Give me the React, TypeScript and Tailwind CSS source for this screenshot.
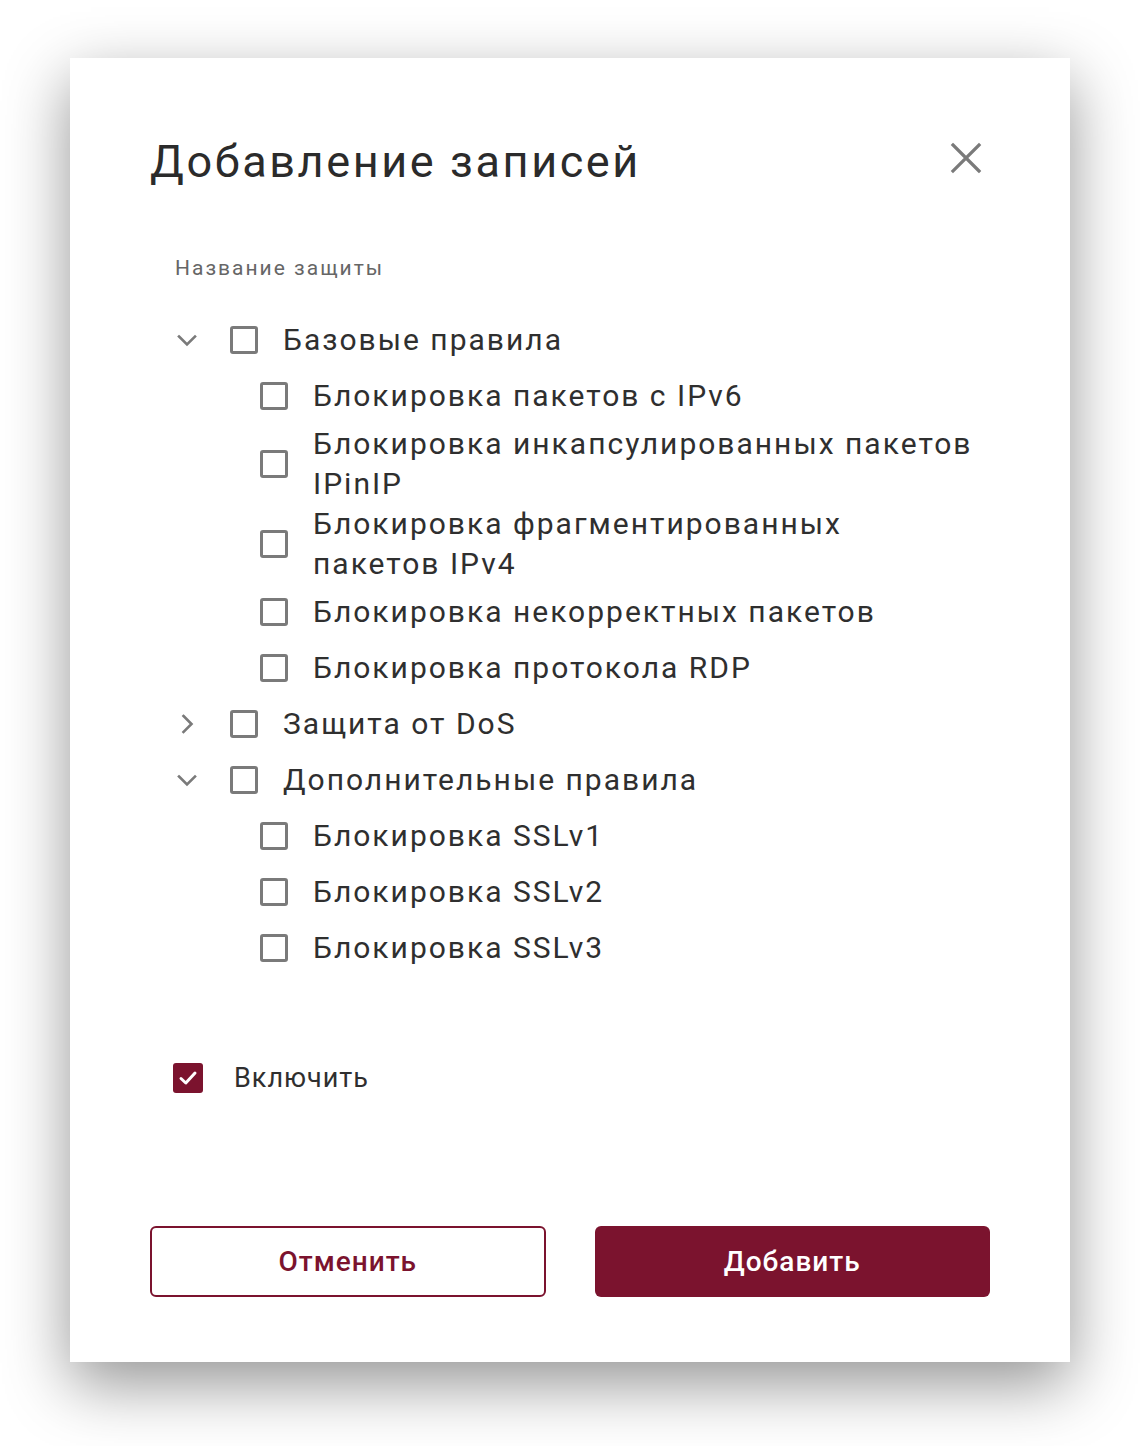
import { useState } from 'react'

type Rule = { id: string; label: string }
type Group = { id: string; label: string; open: boolean; rules: Rule[] }

const groups: Group[] = [
  {
    id: 'base',
    label: 'Базовые правила',
    open: true,
    rules: [
      { id: 'ipv6', label: 'Блокировка пакетов с IPv6' },
      { id: 'ipinip', label: 'Блокировка инкапсулированных пакетов IPinIP' },
      { id: 'frag', label: 'Блокировка фрагментированных пакетов IPv4' },
      { id: 'bad', label: 'Блокировка некорректных пакетов' },
      { id: 'rdp', label: 'Блокировка протокола RDP' },
    ],
  },
  { id: 'dos', label: 'Защита от DoS', open: false, rules: [] },
  {
    id: 'extra',
    label: 'Дополнительные правила',
    open: true,
    rules: [
      { id: 'ssl1', label: 'Блокировка SSLv1' },
      { id: 'ssl2', label: 'Блокировка SSLv2' },
      { id: 'ssl3', label: 'Блокировка SSLv3' },
    ],
  },
]

function Box() {
  return <span className="block h-[28px] w-[28px] shrink-0 rounded-[3px] border-[3px] border-[#7a7a7a]" />
}

function Chevron({ open }: { open: boolean }) {
  return (
    <svg width="24" height="24" viewBox="0 0 24 24" fill="none" stroke="#7a7a7a" strokeWidth="2.6" strokeLinecap="square">
      {open ? <path d="M4 8.5 12 16.5l8-8" /> : <path d="M8.5 4 16.5 12l-8 8" />}
    </svg>
  )
}

function RuleRow({ label }: { label: string }) {
  return (
    <div className="flex min-h-[56px] items-center pl-[85px]">
      <Box />
      <span className="ml-[25px] max-w-[662px] text-[30px] leading-[40px] tracking-[2px] text-[#2f2f2f]">{label}</span>
    </div>
  )
}

export default function App() {
  const [enabled, setEnabled] = useState(true)

  return (
    <div className="min-h-screen bg-white pl-[70px] pt-[58px]" style={{ fontFamily: 'Roboto, "Noto Sans", sans-serif' }}>
      <div className="flex h-[1304px] w-[1000px] flex-col bg-white px-[80px] shadow-[0_22px_60px_rgba(0,0,0,0.42)]">
        {/* Header */}
        <div className="mt-[76px] flex h-[56px] items-center justify-between">
          <h1 className="text-[45px] font-normal leading-[56px] tracking-[2.6px] text-[#2b2b2b]">Добавление записей</h1>
          <button className="-mt-[8px] mr-[6px] flex h-[36px] w-[36px] items-center justify-center">
            <svg width="32" height="32" viewBox="0 0 32 32" stroke="#7a7a7a" strokeWidth="3.2" strokeLinecap="square">
              <path d="M3 3 29 29M29 3 3 29" />
            </svg>
          </button>
        </div>

        <div className="mt-[66px] pl-[25px] text-[21px] leading-[24px] tracking-[2px] text-[#666]">Название защиты</div>

        {/* Rule tree */}
        <div className="mt-[32px] pl-[25px]">
          {groups.map((g) => (
            <div key={g.id}>
              <div className="flex h-[56px] items-center">
                <span className="flex w-[24px] items-center justify-center">
                  <Chevron open={g.open} />
                </span>
                <span className="ml-[31px]">
                  <Box />
                </span>
                <span className="ml-[25px] text-[30px] leading-[40px] tracking-[2px] text-[#2f2f2f]">{g.label}</span>
              </div>
              {g.open && g.rules.map((r) => <RuleRow key={r.id} label={r.label} />)}
            </div>
          ))}
        </div>

        {/* Enable toggle */}
        <label className="mt-[86px] flex h-[32px] cursor-pointer items-center pl-[23px]" onClick={() => setEnabled(!enabled)}>
          <span
            className={
              enabled
                ? 'flex h-[30px] w-[30px] items-center justify-center rounded-[3px] bg-[#7b132e]'
                : 'block h-[30px] w-[30px] rounded-[3px] border-[3px] border-[#7a7a7a]'
            }
          >
            {enabled && (
              <svg width="22" height="22" viewBox="0 0 22 22" fill="none" stroke="white" strokeWidth="3" strokeLinecap="round" strokeLinejoin="round">
                <path d="M4 11.5 8.8 16 18 6" />
              </svg>
            )}
          </span>
          <span className="ml-[31px] text-[27px] leading-[32px] tracking-[1px] text-[#2f2f2f]">Включить</span>
        </label>

        {/* Actions */}
        <div className="mt-[132px] grid grid-cols-2 gap-[49px]">
          <button className="h-[71px] rounded-[6px] border-2 border-[#7b132e] bg-white text-[28px] font-medium tracking-[1px] text-[#7b132e]">
            Отменить
          </button>
          <button className="h-[71px] rounded-[6px] bg-[#7b132e] text-[28px] font-medium tracking-[1px] text-white">
            Добавить
          </button>
        </div>
      </div>
    </div>
  )
}
